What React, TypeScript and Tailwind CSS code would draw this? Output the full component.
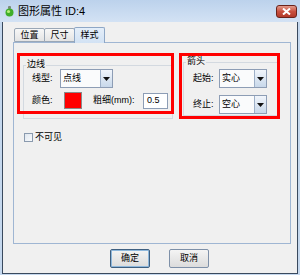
import React from "react";

const Combo = ({ value, className }: { value: string; className: string }) => (
  <div className={`flex border border-[#8d9db5] bg-white ${className}`}>
    <div className="flex-1 flex items-center pl-[2px] bg-[#fafbfc]">{value}</div>
    <div className="w-[12px] border-l border-[#9eb0c8] bg-gradient-to-b from-[#f1f5fb] to-[#c8d8ea] flex items-center justify-center">
      <svg width="7" height="4" viewBox="0 0 7 4">
        <path d="M0 0h7L3.5 4z" fill="#111" />
      </svg>
    </div>
  </div>
);

const App: React.FC = () => {
  return (
    <div className="w-[300px] h-[275px] bg-[#c5d8ee] flex flex-col overflow-hidden text-black font-['Liberation_Sans','Noto_Sans_CJK_SC',sans-serif]">
      {/* Title bar */}
      <div className="h-[22px] flex items-center pl-[5px] pr-[3px] bg-gradient-to-b from-[#bcd2ec] to-[#d3e2f4]">
        <svg width="9" height="11" viewBox="0 0 9 11" className="mr-[4px]">
          <rect x="3" y="0" width="3" height="3" rx="1" fill="#7a8a7a" />
          <circle cx="4.5" cy="6.5" r="4" fill="#3fae2a" />
          <circle cx="3.5" cy="5.5" r="1.6" fill="#b6ef7a" />
        </svg>
        <span className="text-[11px] leading-none">图形属性 ID:4</span>
        <div className="ml-auto w-[21px] h-[13px] rounded-[3px] border border-[#6b231b] bg-gradient-to-b from-[#e29a8c] via-[#c9503f] to-[#b23a2a] flex items-center justify-center">
          <svg width="9" height="7" viewBox="0 0 9 7">
            <path d="M1 0.5L8 6.5M8 0.5L1 6.5" stroke="#fff" strokeWidth="2" />
          </svg>
        </div>
      </div>

      {/* Body */}
      <div className="flex-1 ml-[2px] mr-[2px] mb-[1px] border-l border-r border-b border-[#3a4a5e] bg-[#f0f0f0] flex flex-col text-[9px] leading-none">
        {/* Tabs */}
        <div className="flex items-end ml-[11px] mt-[4px] h-[16px]">
          <div className="w-[31px] h-[14px] border border-[#9aa7b6] rounded-t-[2px] bg-gradient-to-b from-[#f7f7f7] to-[#e4e4e4] flex items-center justify-center">位置</div>
          <div className="w-[31px] h-[14px] -ml-px border border-[#9aa7b6] rounded-t-[2px] bg-gradient-to-b from-[#f7f7f7] to-[#e4e4e4] flex items-center justify-center">尺寸</div>
          <div className="w-[31px] h-[16px] -ml-px border border-b-0 border-[#8ea7c6] rounded-t-[2px] bg-gradient-to-b from-[#e4eef9] to-[#d2e2f4] flex items-center justify-center relative z-10 -mb-px">样式</div>
        </div>

        {/* Panel */}
        <div className="ml-[10px] w-[278px] h-[202px] border border-[#9fb6d3] bg-[#f0f0f0] relative">
          <div className="flex items-start">
            {/* 边线 */}
            <div className="mt-[22px] ml-[9px] w-[150px] h-[54px] border border-[#d3d9e0] relative">
              <span className="absolute -top-[6px] left-[2px] px-[1px] bg-[#f0f0f0]">边线</span>
              <div className="flex items-center mt-[3px] pl-[8px]">
                <span className="w-[28px]">线型:</span>
                <Combo value="点线" className="w-[53px] h-[19px]" />
              </div>
              <div className="flex items-center mt-[4px] pl-[8px]">
                <span className="w-[32px]">颜色:</span>
                <div className="w-[18px] h-[17px] border border-[#8a8a8a] bg-[#ff0000]" />
                <span className="ml-[11px] w-[50px]">粗细(mm):</span>
                <div className="w-[25px] h-[16px] border border-[#8d9db5] bg-white flex items-center pl-[3px]">0.5</div>
              </div>
            </div>

            {/* 箭头 */}
            <div className="mt-[19px] ml-[10px] w-[95px] h-[54px] border border-[#d3d9e0] relative">
              <span className="absolute -top-[6px] left-[2px] px-[1px] bg-[#f0f0f0]">箭头</span>
              <div className="flex items-center mt-[6px] pl-[9px]">
                <span className="w-[26px]">起始:</span>
                <Combo value="实心" className="w-[48px] h-[19px]" />
              </div>
              <div className="flex items-center mt-[7px] pl-[9px]">
                <span className="w-[26px]">终止:</span>
                <Combo value="空心" className="w-[48px] h-[19px]" />
              </div>
            </div>
          </div>

          {/* 不可见 */}
          <div className="flex items-center mt-[14px] ml-[10px]">
            <div className="w-[9px] h-[9px] border border-[#8a9aae] bg-gradient-to-br from-[#dfe6ee] to-[#f8fafc] mr-[2px]" />
            <span>不可见</span>
          </div>

          {/* annotation boxes */}
          <div className="absolute left-[3px] top-[10px] w-[157px] h-[61px] border-[3px] border-[#ff0000]" />
          <div className="absolute left-[165px] top-[10px] w-[101px] h-[66px] border-[3px] border-[#ff0000]" />
        </div>

        {/* Buttons */}
        <div className="flex ml-[107px] mt-[5px] gap-[19px]">
          <div className="w-[40px] h-[19px] rounded-[2px] border border-[#3e5f80] shadow-[inset_0_0_0_1px_#8fb8dc] bg-gradient-to-b from-[#f4f4f4] to-[#dcdcdc] flex items-center justify-center">确定</div>
          <div className="w-[40px] h-[19px] rounded-[2px] border border-[#7e90a8] bg-gradient-to-b from-[#f4f4f4] to-[#dcdcdc] flex items-center justify-center">取消</div>
        </div>
      </div>
    </div>
  );
};

export default App;
